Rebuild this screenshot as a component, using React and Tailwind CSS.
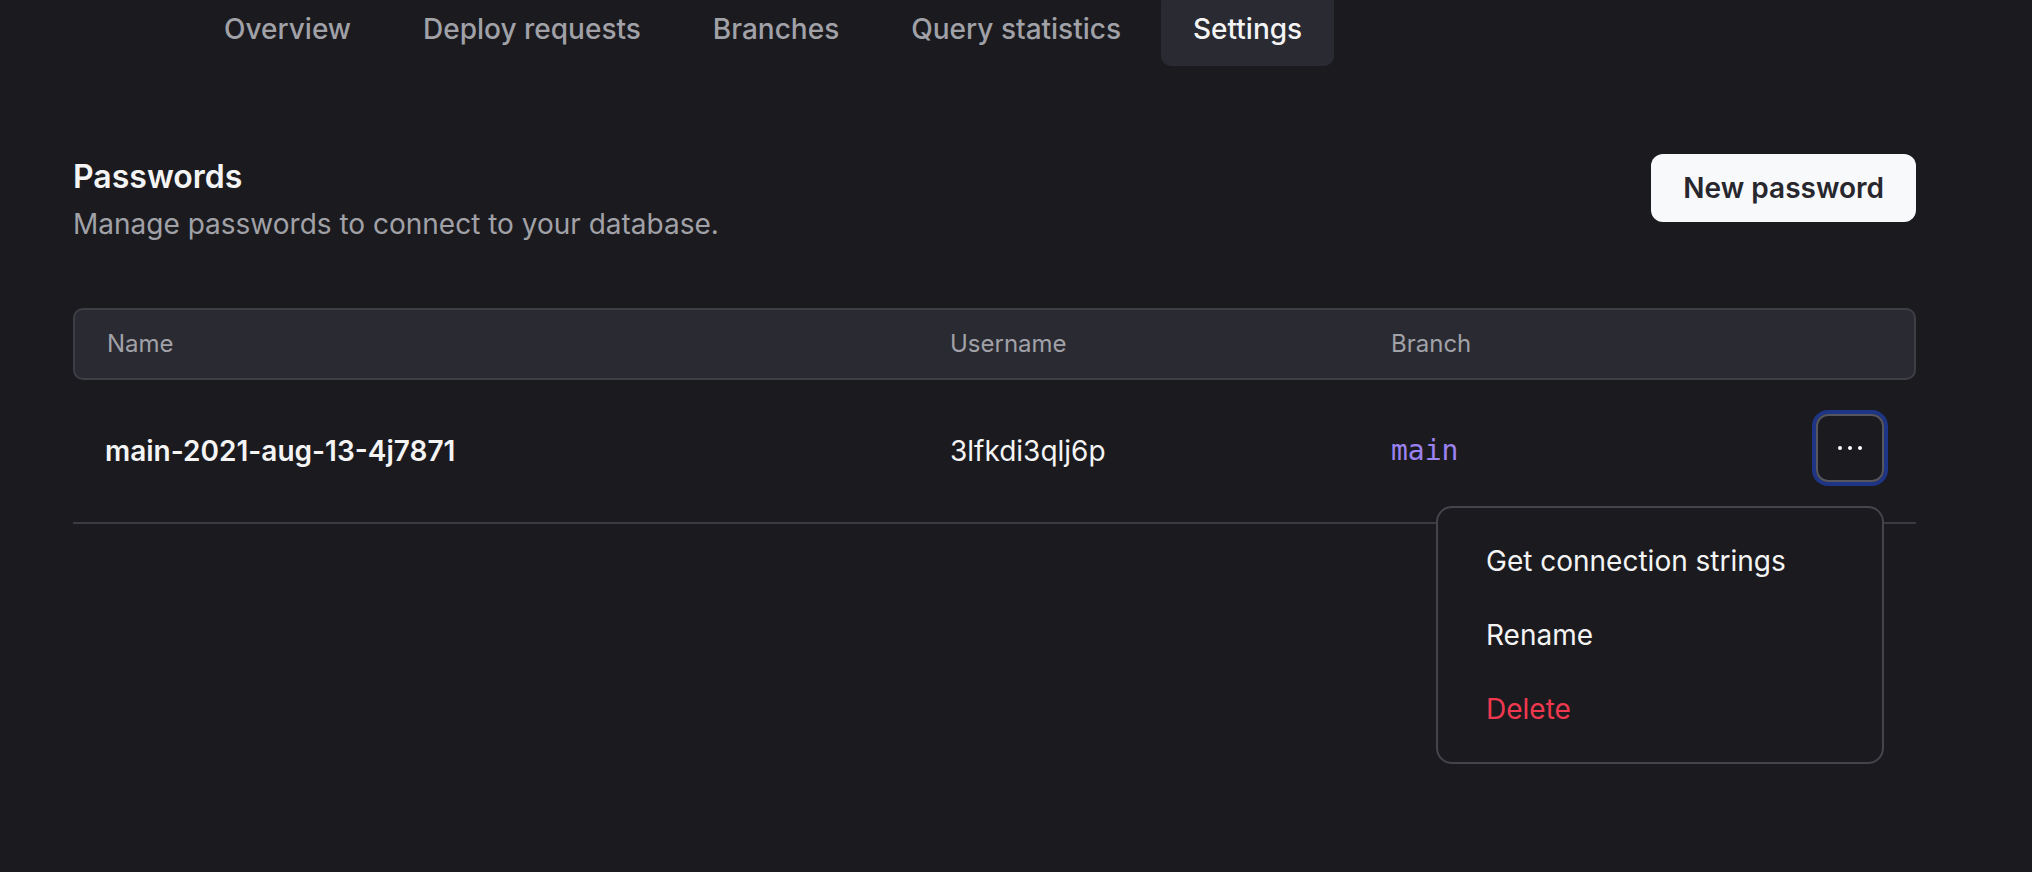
const TABS = ['Overview', 'Deploy requests', 'Branches', 'Query statistics', 'Settings']

const PASSWORDS = [
  { name: 'main-2021-aug-13-4j7871', username: '3lfkdi3qlj6p', branch: 'main' },
]

function Tabs({ active }) {
  return (
    <nav className="-mt-[8px] flex gap-2 pl-[192px]">
      {TABS.map((tab) => (
        <a
          key={tab}
          href="#"
          className={
            tab === active
              ? 'flex h-[74px] items-center rounded-[10px] bg-[#2a2a32] px-8 text-[28px] font-medium text-[#f4f4f5]'
              : 'flex h-[74px] items-center rounded-[10px] px-8 text-[28px] font-medium text-[#a1a1a8]'
          }
        >
          {tab}
        </a>
      ))}
    </nav>
  )
}

function RowMenu() {
  return (
    <div className="absolute right-0 top-[92px] z-10 w-[448px] rounded-[16px] border-2 border-[#44444c] bg-[#1b1b1f] py-4">
      <button type="button" className="block h-[74px] w-full px-12 text-left text-[28px] text-[#f4f4f5]">
        Get connection strings
      </button>
      <button type="button" className="block h-[74px] w-full px-12 text-left text-[28px] text-[#f4f4f5]">
        Rename
      </button>
      <button type="button" className="block h-[74px] w-full px-12 text-left text-[28px] text-[#f0384f]">
        Delete
      </button>
    </div>
  )
}

function PasswordRow({ item, menuOpen }) {
  return (
    <div className="grid h-[144px] grid-cols-[845px_441px_1fr_auto] items-center border-b-2 border-[#3a3a42] px-8">
      <span className="text-[28px] font-semibold text-[#f4f4f5]">{item.name}</span>
      <span className="text-[28px] text-[#f4f4f5]">{item.username}</span>
      <span className="font-['DejaVu_Sans_Mono',monospace] text-[28px] text-[#9b83f2]">{item.branch}</span>
      <div className="relative -mt-[6px]">
        <button
          type="button"
          className="flex h-[68px] w-[68px] items-center justify-center gap-[6px] rounded-[12px] border-2 border-[#56565e] ring-4 ring-[#1d3584]"
        >
          <span className="h-[4px] w-[4px] rounded-full bg-white" />
          <span className="h-[4px] w-[4px] rounded-full bg-white" />
          <span className="h-[4px] w-[4px] rounded-full bg-white" />
        </button>
        {menuOpen ? <RowMenu /> : null}
      </div>
    </div>
  )
}

export default function App() {
  return (
    <div className="min-h-screen overflow-hidden bg-[#1b1b1f] font-['Inter',sans-serif]">
      <Tabs active="Settings" />

      <section className="mt-[91px] pl-[73px] pr-[116px]">
        <div className="flex items-start justify-between">
          <div>
            <h2 className="text-[32px] font-semibold leading-[40px] text-[#f4f4f5]">Passwords</h2>
            <p className="mt-[7px] text-[28px] leading-[40px] text-[#a1a1a8]">
              Manage passwords to connect to your database.
            </p>
          </div>
          <button
            type="button"
            className="-mt-[3px] h-[68px] rounded-[12px] bg-[#f8f9fb] px-8 text-[28px] font-semibold text-[#27272d]"
          >
            New password
          </button>
        </div>

        <div className="mt-[64px]">
          <div className="grid h-[72px] grid-cols-[843px_441px_1fr] items-center rounded-[10px] border-2 border-[#3e3e47] bg-[#2a2a32] px-8 text-[24px] text-[#a1a1a8]">
            <span>Name</span>
            <span>Username</span>
            <span>Branch</span>
          </div>
          {PASSWORDS.map((item) => (
            <PasswordRow key={item.name} item={item} menuOpen />
          ))}
        </div>
      </section>
    </div>
  )
}
